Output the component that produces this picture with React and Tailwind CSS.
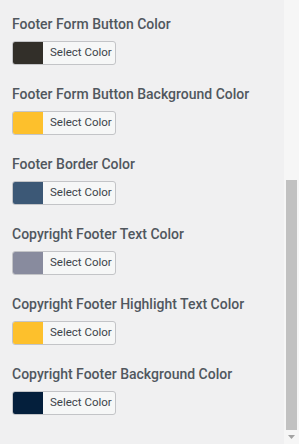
import React from "react";

const items = [
  { label: "Footer Form Button Color", color: "bg-[#322f29]" },
  { label: "Footer Form Button Background Color", color: "bg-[#fdc02c]" },
  { label: "Footer Border Color", color: "bg-[#3c5876]" },
  { label: "Copyright Footer Text Color", color: "bg-[#888b9e]" },
  { label: "Copyright Footer Highlight Text Color", color: "bg-[#fdc02c]" },
  { label: "Copyright Footer Background Color", color: "bg-[#041f3c]" },
];

function ColorPicker({ color }) {
  return (
    <button className="flex h-[24px] w-[104px] items-stretch overflow-hidden rounded-[3px] border border-[#c3c4c7] bg-[#f6f7f7] p-0 text-left">
      <span className={`w-[30px] ${color}`} />
      <span className="flex items-center pl-[7px] text-[11.5px] text-[#3c434a]">
        Select Color
      </span>
    </button>
  );
}

export default function App() {
  return (
    <div
      className="flex h-[444px] w-[299px] overflow-hidden bg-[#f0f0f1]"
      style={{ fontFamily: "Roboto, 'Noto Sans', sans-serif" }}
    >
      <div className="flex w-[284px] flex-col gap-[19px] pl-[12px] pt-[14px]">
        {items.map((it) => (
          <div key={it.label} className="flex flex-col gap-[7px]">
            <div className="text-[14px] font-medium leading-5 text-[#50575e]">
              {it.label}
            </div>
            <ColorPicker color={it.color} />
          </div>
        ))}
      </div>
      <div className="flex w-[15px] flex-col bg-[#f6f6f6]">
        <div className="h-[180px]" />
        <div className="mx-[2px] h-[250px] bg-[#c1c1c1]" />
        <div className="flex h-[14px] items-center justify-center">
          <svg width="7" height="4" viewBox="0 0 7 4">
            <polygon points="0,0 7,0 3.5,4" fill="#a3a3a3" />
          </svg>
        </div>
      </div>
    </div>
  );
}
